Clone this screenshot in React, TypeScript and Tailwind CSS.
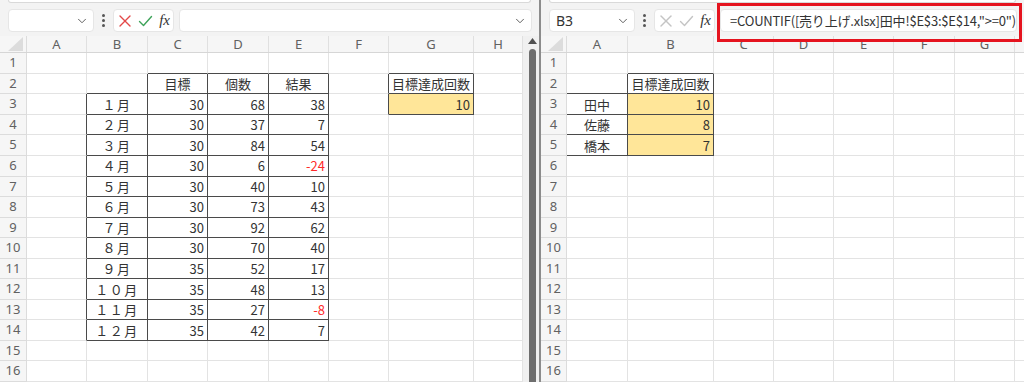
import { ChevronDown } from 'lucide-react';

type Col = { k: string; w: number };
type Cell = { text: string; align?: 'left' | 'center' | 'right'; fill?: boolean; red?: boolean; wide?: boolean };

const FONT = "font-['Noto_Sans_CJK_JP','Noto_Sans',sans-serif]";

const leftCols: Col[] = [
  { k: 'A', w: 60 },
  { k: 'B', w: 61 },
  { k: 'C', w: 60 },
  { k: 'D', w: 61 },
  { k: 'E', w: 60 },
  { k: 'F', w: 60 },
  { k: 'G', w: 85 },
  { k: 'H', w: 49 },
];

const rightCols: Col[] = [
  { k: 'A', w: 61 },
  { k: 'B', w: 86 },
  { k: 'C', w: 60 },
  { k: 'D', w: 60 },
  { k: 'E', w: 60 },
  { k: 'F', w: 61 },
  { k: 'G', w: 60 },
  { k: 'H', w: 60 },
];

const months = ['１月', '２月', '３月', '４月', '５月', '６月', '７月', '８月', '９月', '１０月', '１１月', '１２月'];
const sales = [
  [30, 68, 38],
  [30, 37, 7],
  [30, 84, 54],
  [30, 6, -24],
  [30, 40, 10],
  [30, 73, 43],
  [30, 92, 62],
  [30, 70, 40],
  [35, 52, 17],
  [35, 48, 13],
  [35, 27, -8],
  [35, 42, 7],
];

const leftCells: Record<string, Cell> = {
  '2C': { text: '目標', align: 'center' },
  '2D': { text: '個数', align: 'center' },
  '2E': { text: '結果', align: 'center' },
  '2G': { text: '目標達成回数', align: 'center' },
  '3G': { text: '10', align: 'right', fill: true },
};
months.forEach((m, i) => {
  const r = i + 3;
  const [goal, qty, res] = sales[i];
  leftCells[`${r}B`] = { text: m, align: 'center', wide: true };
  leftCells[`${r}C`] = { text: String(goal), align: 'right' };
  leftCells[`${r}D`] = { text: String(qty), align: 'right' };
  leftCells[`${r}E`] = { text: String(res), align: 'right', red: res < 0 };
});

const rightCells: Record<string, Cell> = {
  '2B': { text: '目標達成回数', align: 'center' },
  '3A': { text: '田中', align: 'center' },
  '4A': { text: '佐藤', align: 'center' },
  '5A': { text: '橋本', align: 'center' },
  '3B': { text: '10', align: 'right', fill: true },
  '4B': { text: '8', align: 'right', fill: true },
  '5B': { text: '7', align: 'right', fill: true },
};

const ROWS = Array.from({ length: 16 }, (_, i) => i + 1);

function Sheet({ cols, cells, rowHeadW }: { cols: Col[]; cells: Record<string, Cell>; rowHeadW: number }) {
  const keys = cols.map((c) => c.k);
  const has = (r: number, ci: number) => ci >= 0 && ci < keys.length && !!cells[`${r}${keys[ci]}`];

  return (
    <div className={`flex flex-col ${FONT}`}>
      {/* column headers */}
      <div className="flex h-[17px] bg-[#f6f6f6] border-b border-[#d6d6d6]">
        <div className="relative shrink-0 border-r border-[#dcdcdc]" style={{ width: rowHeadW }}>
          <svg className="absolute right-[3px] bottom-[1px]" width="15" height="14" viewBox="0 0 15 14">
            <polygon points="15,0 15,14 0,14" fill="#dcdcdc" />
          </svg>
        </div>
        {cols.map((c) => (
          <div
            key={c.k}
            className="shrink-0 flex items-center justify-center border-r border-[#e0e0e0] text-[13px] text-[#616161] font-['Noto_Sans',sans-serif]"
            style={{ width: c.w }}
          >
            {c.k}
          </div>
        ))}
      </div>
      {ROWS.map((r) => (
        <div key={r} className="flex h-[20.55px]">
          <div
            className="shrink-0 flex items-center justify-center bg-[#f6f6f6] border-r border-b border-[#dcdcdc] text-[13px] text-[#616161] font-['Noto_Sans',sans-serif]"
            style={{ width: rowHeadW }}
          >
            {r}
          </div>
          {cols.map((c, ci) => {
            const cell = cells[`${r}${c.k}`];
            const darkR = has(r, ci) || has(r, ci + 1);
            const darkB = has(r, ci) || has(r + 1, ci);
            const align =
              cell?.align === 'right' ? 'justify-end pr-[3px]' : cell?.align === 'center' ? 'justify-center' : 'justify-start';
            return (
              <div
                key={c.k}
                className={`shrink-0 flex items-center border-r border-b text-[13px] leading-none whitespace-nowrap overflow-hidden ${align} ${
                  darkR ? 'border-r-[#4a4a4a]' : 'border-r-[#e3e3e3]'
                } ${darkB ? 'border-b-[#4a4a4a]' : 'border-b-[#e3e3e3]'} ${cell?.fill ? 'bg-[#ffe699]' : 'bg-white'} ${
                  cell?.red ? 'text-[#ff2a2a]' : 'text-[#333333]'
                } ${cell?.wide ? 'tracking-[1.5px]' : ''}`}
                style={{ width: c.w }}
              >
                {cell?.text}
              </div>
            );
          })}
        </div>
      ))}
    </div>
  );
}

function XIcon({ color }: { color: string }) {
  return (
    <svg width="14" height="14" viewBox="0 0 14 14" fill="none" stroke={color} strokeWidth="1.4" strokeLinecap="round">
      <line x1="2" y1="2" x2="12" y2="12" />
      <line x1="12" y1="2" x2="2" y2="12" />
    </svg>
  );
}

function CheckIcon({ color }: { color: string }) {
  return (
    <svg width="15" height="14" viewBox="0 0 15 14" fill="none" stroke={color} strokeWidth="1.4" strokeLinecap="round" strokeLinejoin="round">
      <polyline points="1.5,7.5 5.5,11.5 13.5,2.5" />
    </svg>
  );
}

function FormulaBar({ name, active, formula }: { name: string; active: boolean; formula?: string }) {
  return (
    <div className="h-[41px] bg-[#f3f3f3] flex flex-col">
      <div className="h-[3px] mx-2 bg-white border-b border-x border-[#d9d9d9] rounded-b-[4px]" />
      <div className="flex items-start pt-[6px] pl-2 pr-[7px]">
        <div className="w-[86px] h-[23px] shrink-0 bg-white rounded-[4px] border border-[#e6e6e6] flex items-center justify-between pl-[6px] pr-[4px]">
          <span className="text-[14px] text-[#333] font-['Noto_Sans',sans-serif]">{name}</span>
          <ChevronDown size={14} strokeWidth={1.6} color="#555" />
        </div>
        <div className="w-[19px] h-[23px] shrink-0 flex flex-col items-center justify-center gap-[2px]">
          <span className="w-[3px] h-[3px] rounded-full bg-[#555]" />
          <span className="w-[3px] h-[3px] rounded-full bg-[#555]" />
          <span className="w-[3px] h-[3px] rounded-full bg-[#555]" />
        </div>
        <div className="w-[61px] h-[23px] shrink-0 bg-white rounded-[4px] border border-[#e6e6e6] flex items-center justify-between pl-[4px] pr-[3px]">
          <XIcon color={active ? '#e34848' : '#c4c4c4'} />
          <CheckIcon color={active ? '#3ea35a' : '#c4c4c4'} />
          <span className="text-[15px] italic text-[#333] font-['Liberation_Serif',serif] leading-none">fx</span>
        </div>
        <div className="flex-1 min-w-0 h-[23px] ml-[5px] bg-white rounded-[4px] border border-[#e6e6e6] flex items-center justify-between pl-[9px] pr-[4px]">
          <span className={`text-[13px] tracking-[-0.2px] text-[#333] whitespace-nowrap ${FONT}`}>{formula}</span>
          {active && <ChevronDown size={14} strokeWidth={1.6} color="#555" className="shrink-0" />}
        </div>
      </div>
    </div>
  );
}

export default function App() {
  return (
    <div className="w-[1024px] h-[382px] overflow-hidden flex bg-white">
      {/* left window */}
      <div className="w-[539px] shrink-0 flex flex-col">
        <FormulaBar name="" active />
        <div className="flex">
          <Sheet cols={leftCols} cells={leftCells} rowHeadW={27} />
          <div className="w-[16px] shrink-0 bg-[#f0f0f0] flex flex-col items-center pl-[2px] pt-[2px]">
            <svg width="9" height="6" viewBox="0 0 9 6">
              <polygon points="4.5,0 9,6 0,6" fill="#505050" />
            </svg>
            <div className="mt-[5px] w-[7px] flex-1 bg-[#6e6e6e] rounded-t-[4px]" />
          </div>
        </div>
      </div>
      <div className="w-[2px] shrink-0 bg-[#8c8c8c]" />
      {/* right window */}
      <div className="flex-1 min-w-0 flex flex-col relative overflow-hidden">
        <FormulaBar name="B3" active={false} formula={'=COUNTIF([売り上げ.xlsx]田中!$E$3:$E$14,">=0")'} />
        <Sheet cols={rightCols} cells={rightCells} rowHeadW={26} />
        <div className="absolute left-[176px] top-[3px] w-[305px] h-[39px] border-[3px] border-[#e5141f]" />
      </div>
    </div>
  );
}
